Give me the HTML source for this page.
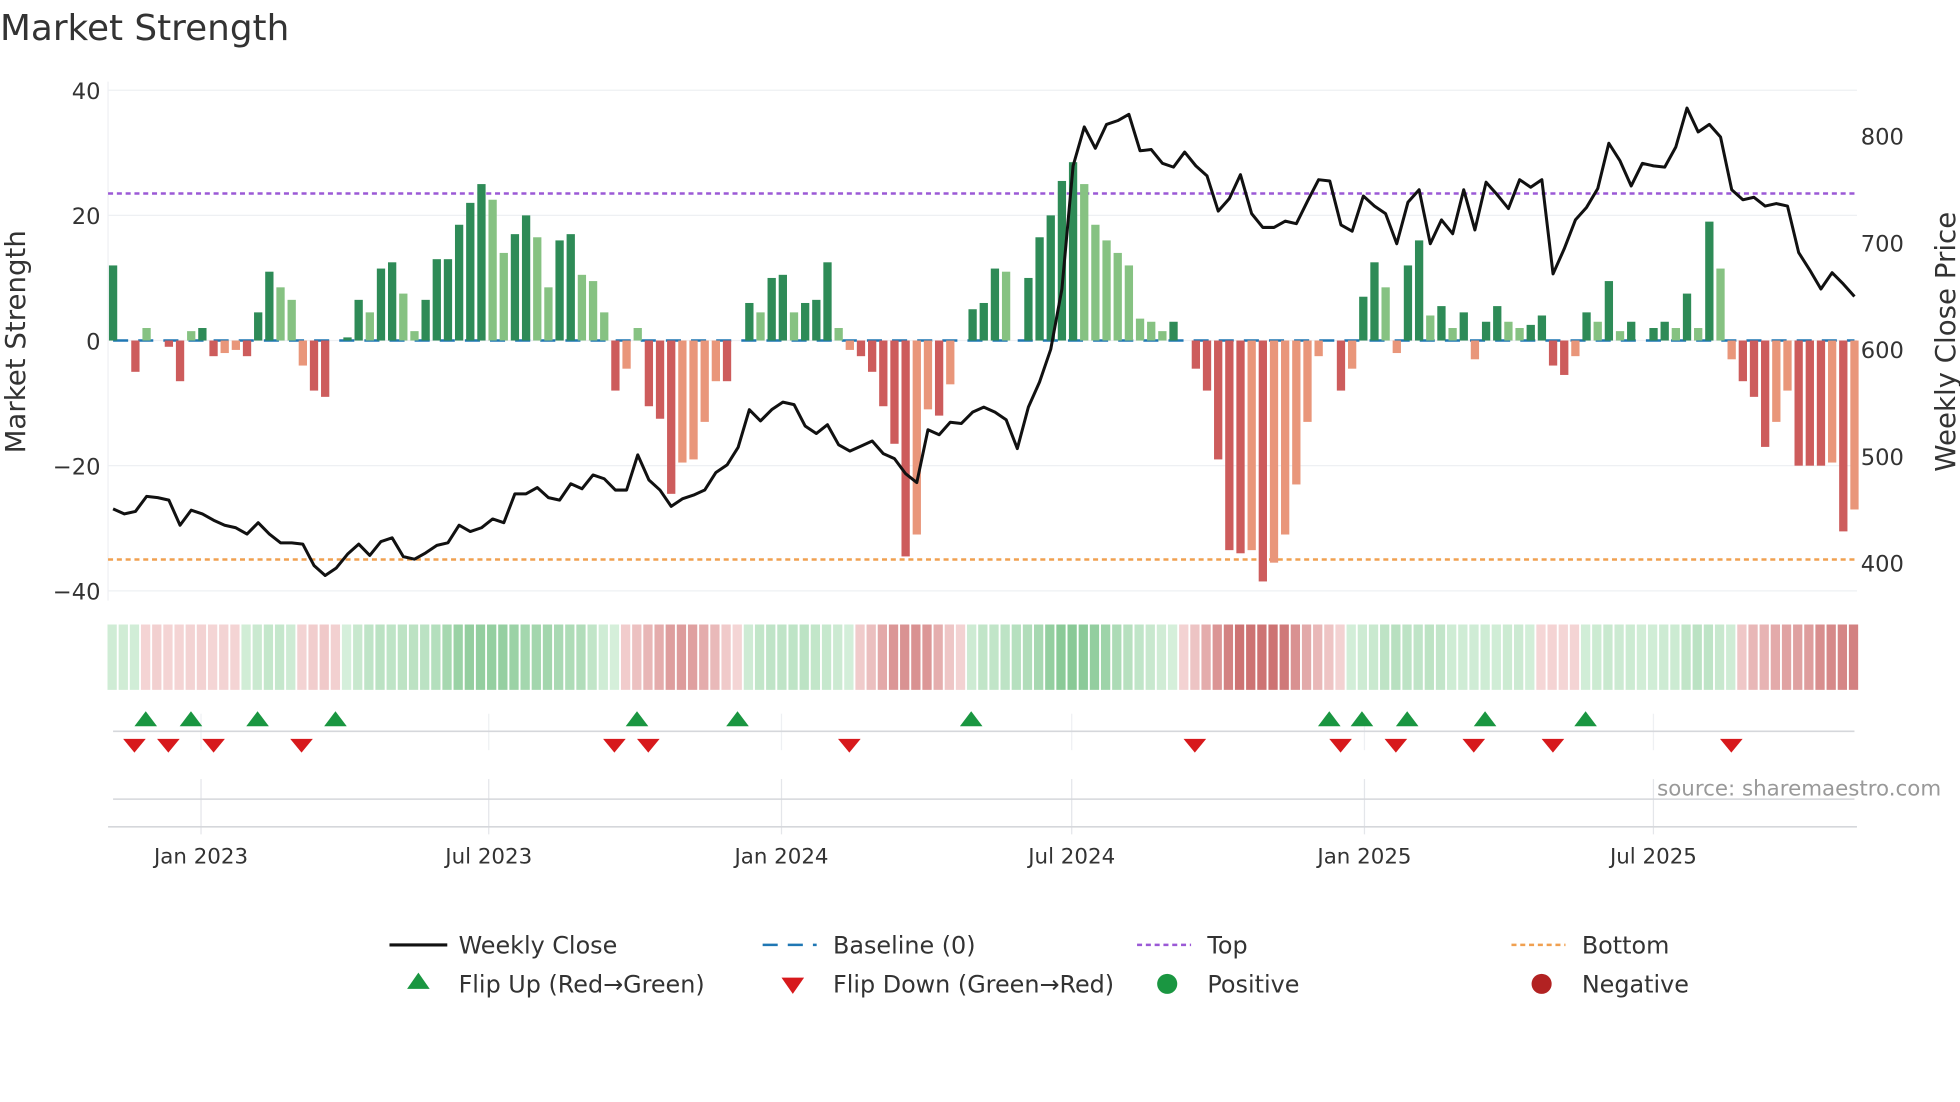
<!DOCTYPE html>
<html><head><meta charset="utf-8"><style>
html,body{margin:0;padding:0;background:#fff;width:1960px;height:1102px;overflow:hidden}
svg{display:block}
text{font-family:"DejaVu Sans","Liberation Sans",sans-serif;fill:#333}
</style></head><body>
<svg id="s" width="1960" height="1102" viewBox="0 0 1560 877" preserveAspectRatio="none" xmlns="http://www.w3.org/2000/svg">
<text x="0" y="32" font-size="28.5">Market Strength</text>
<g id="grid"></g>
<g id="bars"></g>
<g id="heat"></g>
<g id="mk"></g>
<text x="1545" y="633" font-size="17" fill="#999" text-anchor="end" style="fill:#999">source: sharemaestro.com</text>
<text transform="translate(20,272) rotate(-90)" font-size="22" text-anchor="middle">Market Strength</text>
<text transform="translate(1556,272) rotate(-90)" font-size="22" text-anchor="middle">Weekly Close Price</text>
<g font-size="19">
<line x1="310" y1="752" x2="356" y2="752" stroke="#111" stroke-width="2.5"/><text x="365" y="759">Weekly Close</text>
<line x1="607" y1="752" x2="650" y2="752" stroke="#1f77b4" stroke-width="2" stroke-dasharray="12,8"/><text x="663" y="759">Baseline (0)</text>
<line x1="905" y1="752" x2="948" y2="752" stroke="#9b59d6" stroke-width="2" stroke-dasharray="4,3"/><text x="961" y="759">Top</text>
<line x1="1203" y1="752" x2="1246" y2="752" stroke="#f0a050" stroke-width="2" stroke-dasharray="4,3"/><text x="1259" y="759">Bottom</text>
<polygon points="333,774 342,787 324,787" fill="#1a9641"/><text x="365" y="790">Flip Up (Red→Green)</text>
<polygon points="622,778 640,778 631,791" fill="#d7191c"/><text x="663" y="790">Flip Down (Green→Red)</text>
<circle cx="929" cy="783" r="8" fill="#1a9641"/><text x="961" y="790">Positive</text>
<circle cx="1227" cy="783" r="8" fill="#b22222"/><text x="1259" y="790">Negative</text>
</g>
</svg>
<script>
const NS="http://www.w3.org/2000/svg";
function el(p,t,a,txt){const e=document.createElementNS(NS,t);for(const k in a)e.setAttribute(k,a[k]);if(txt!=null)e.textContent=txt;document.getElementById(p).appendChild(e);return e;}
const V=[12,0,-5,2,0,-1,-6.5,1.5,2,-2.5,-2,-1.5,-2.5,4.5,11,8.5,6.5,-4,-8,-9,0,0.5,6.5,4.5,11.5,12.5,7.5,1.5,6.5,13,13,18.5,22,25,22.5,14,17,20,16.5,8.5,16,17,10.5,9.5,4.5,-8,-4.5,2,-10.5,-12.5,-24.5,-19.5,-19,-13,-6.5,-6.5,0,6,4.5,10,10.5,4.5,6,6.5,12.5,2,-1.5,-2.5,-5,-10.5,-16.5,-34.5,-31,-11,-12,-7,0,5,6,11.5,11,0,10,16.5,20,25.5,28.5,25,18.5,16,14,12,3.5,3,1.5,3,0,-4.5,-8,-19,-33.5,-34,-33.5,-38.5,-35.5,-31,-23,-13,-2.5,0,-8,-4.5,7,12.5,8.5,-2,12,16,4,5.5,2,4.5,-3,3,5.5,3,2,2.5,4,-4,-5.5,-2.5,4.5,3,9.5,1.5,3,0,2,3,2,7.5,2,19,11.5,-3,-6.5,-9,-17,-13,-8,-20,-20,-20,-19.5,-30.5,-27];
const P=[405,409,407,395,396,398,418,406,409,414,418,420,425,416,425,432,432,433,450,458,452,441,433,442,431,428,443,445,440,434,432,418,423,420,413,416,393,393,388,396,398,385,389,378,381,390,390,362,382,390,403,397,394,390,376,370,356,326,335,326,320,322,339,345,338,354,359,355,351,361,365,377,384,342,346,336,337,328,324,328,334,357,324,304,278,230,132,101,118,99,96,91,120,119,130,133,121,132,140,168,158,139,170,181,181,176,178,160,143,144,179,184,156,164,170,194,161,151,194,175,186,151,183,145,155,166,143,149,143,218,198,175,165,150,114,128,148,130,132,133,117,86,105,99,109,151,159,157,164,162,164,201,215,230,217,226,236];
const N=V.length, x0=90, dx=(1476-90)/(N-1);
const Y=v=>271-v*4.98;
[40,20,0,-20,-40].forEach(v=>{el('grid','line',{x1:86,x2:1478,y1:Y(v),y2:Y(v),stroke:'#eef0f3','stroke-width':1});el('grid','text',{x:80,y:Y(v)+7,'font-size':18,'text-anchor':'end'},v<0?'−'+(-v):v);});
el('grid','line',{x1:86,x2:86,y1:65,y2:478,stroke:'#eef0f3'});
[[800,108],[700,193],[600,278],[500,363],[400,448]].forEach(([t,y])=>el('grid','text',{x:1481,y:y+7,'font-size':18},t));
const ticks=[[160,'Jan 2023'],[389,'Jul 2023'],[622,'Jan 2024'],[853,'Jul 2024'],[1086,'Jan 2025'],[1316,'Jul 2025']];
ticks.forEach(([x,l])=>{el('grid','line',{x1:x,x2:x,y1:568,y2:597,stroke:'#eef0f3'});el('grid','line',{x1:x,x2:x,y1:620,y2:664,stroke:'#e4e6ea'});el('grid','text',{x:x,y:687,'font-size':17,'text-anchor':'middle'},l);});
el('grid','line',{x1:90,x2:1476,y1:582,y2:582,stroke:'#d5d7db','stroke-width':1.2});
el('grid','line',{x1:90,x2:1476,y1:636,y2:636,stroke:'#d5d7db','stroke-width':1.2});
el('grid','line',{x1:86,x2:1478,y1:658,y2:658,stroke:'#d5d7db','stroke-width':1.2});
el('bars','line',{x1:90,x2:1476,y1:271,y2:271,stroke:'#1f77b4','stroke-width':2,'stroke-dasharray':'12,8'});
el('bars','line',{x1:86,x2:1478,y1:Y(23.5),y2:Y(23.5),stroke:'#9b59d6','stroke-width':2,'stroke-dasharray':'4,3'});
el('bars','line',{x1:86,x2:1478,y1:Y(-35),y2:Y(-35),stroke:'#f0a050','stroke-width':2,'stroke-dasharray':'4,3'});
for(let i=0;i<N;i++){const v=V[i];if(v===0)continue;const prev=i>0?V[i-1]:0;const rising=Math.abs(v)>=Math.abs(prev);
let c;if(v>0)c=rising?'#2e8b57':'#86c282';else c=rising?'#cd5c5c':'#e9967a';
const x=x0+i*dx-3.3;el('bars','rect',{x:x,width:6.6,y:Math.min(Y(v),271),height:Math.abs(v)*4.98,fill:c});}
let d='';for(let i=0;i<N;i++)d+=(i?'L':'M')+(x0+i*dx).toFixed(1)+','+P[i];
el('bars','path',{d:d,fill:'none',stroke:'#111','stroke-width':2.4,'stroke-linejoin':'round'});
for(let i=0;i<N;i++){let s=0,n=0;for(let j=Math.max(0,i-2);j<=Math.min(N-1,i+2);j++){s+=V[j];n++;}s/=n;const a=Math.min(1,Math.abs(s)/30);
let c;if(s>=0){c=`rgb(${Math.round(215-100*a)},${Math.round(240-50*a)},${Math.round(220-90*a)})`}else{c=`rgb(${Math.round(245-40*a)},${Math.round(215-100*a)},${Math.round(215-100*a)})`}
el('heat','rect',{x:x0+i*dx-dx/2,width:dx-1.5,y:497,height:52,fill:c});}
[116,152,205,267,507,587,773,1058,1084,1120,1182,1262].forEach(x=>el('mk','polygon',{points:`${x},566 ${x+9},578 ${x-9},578`,fill:'#1a9641'}));
[107,134,170,240,489,516,676,951,1067,1111,1173,1236,1378].forEach(x=>el('mk','polygon',{points:`${x-9},588 ${x+9},588 ${x},599`,fill:'#d7191c'}));
</script>
</body></html>
